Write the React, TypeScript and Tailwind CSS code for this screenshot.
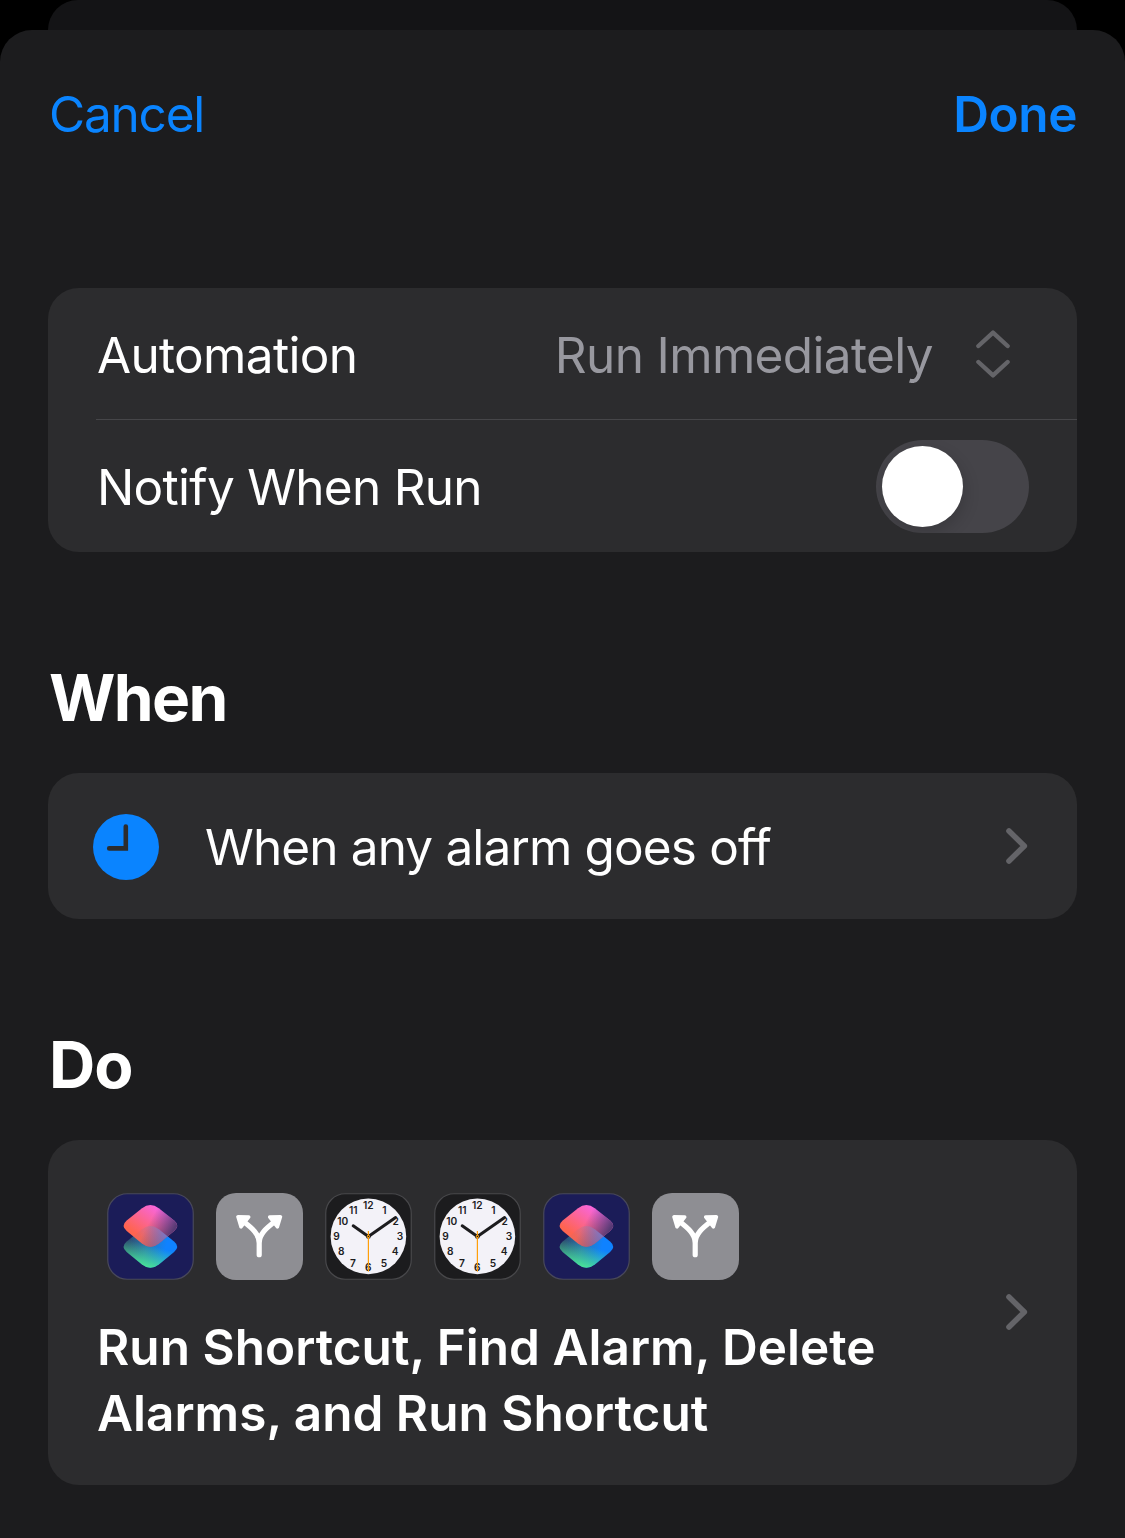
import { useId, useState } from "react";

function ShortcutsIcon() {
  const id = useId().replace(/[^a-zA-Z0-9]/g, "");
  const diamond =
    "M35 15.2Q43.4 8.6 51.8 15.2L67.1 27.5Q73.3 32.8 67.1 38.1L51.8 50.4Q43.4 57 35 50.4L19.7 38.1Q13.5 32.8 19.7 27.5Z";
  return (
    <svg width="87" height="87" viewBox="0 0 87 87" className="shrink-0">
      <defs>
        <linearGradient id={`${id}b`} gradientUnits="userSpaceOnUse" x1="20" y1="30" x2="58" y2="38">
          <stop offset="0" stopColor="#2c4a70" />
          <stop offset="0.5" stopColor="#2a7bb0" />
          <stop offset="1" stopColor="#0f82ff" />
        </linearGradient>
        <linearGradient id={`${id}g`} gradientUnits="userSpaceOnUse" x1="40" y1="54" x2="46" y2="32">
          <stop offset="0" stopColor="#4be696" />
          <stop offset="1" stopColor="#47e08f" stopOpacity="0" />
        </linearGradient>
        <linearGradient id={`${id}p`} gradientUnits="userSpaceOnUse" x1="48" y1="13" x2="28" y2="40">
          <stop offset="0" stopColor="#f866dc" />
          <stop offset="1" stopColor="#ff6450" />
        </linearGradient>
        <linearGradient id={`${id}f`} gradientUnits="userSpaceOnUse" x1="44" y1="26" x2="66" y2="38">
          <stop offset="0" stopColor="#4c3a78" stopOpacity="0" />
          <stop offset="1" stopColor="#4f3870" stopOpacity="0.95" />
        </linearGradient>
        <linearGradient id={`${id}o`} gradientUnits="userSpaceOnUse" x1="30" y1="24" x2="58" y2="20">
          <stop offset="0" stopColor="#d86868" stopOpacity="0.25" />
          <stop offset="1" stopColor="#7d86d8" stopOpacity="0.75" />
        </linearGradient>
        <clipPath id={`${id}c`}>
          <path d={diamond} />
        </clipPath>
      </defs>
      <rect x="0.75" y="0.75" width="85.5" height="85.5" rx="19.5" fill="#1b1c58" stroke="#48485a" strokeWidth="1.2" />
      <g transform="translate(0 21)">
        <path d={diamond} fill={`url(#${id}b)`} />
        <path d={diamond} fill={`url(#${id}g)`} />
      </g>
      <path d={diamond} fill={`url(#${id}p)`} />
      <path d={diamond} fill={`url(#${id}f)`} />
      <g clipPath={`url(#${id}c)`}>
        <path d={diamond} transform="translate(0 21)" fill={`url(#${id}o)`} />
      </g>
    </svg>
  );
}

function BranchIcon() {
  return (
    <svg width="87" height="87" viewBox="0 0 87 87" className="shrink-0">
      <rect width="87" height="87" rx="20" fill="#8e8e93" />
      <g stroke="#fff" strokeLinecap="round" strokeLinejoin="round">
        <path
          d="M43.2 61.7V50C43.2 41 36 35 27.5 28.5M43.2 50C43.2 41 50.4 35 58.9 28.5"
          fill="none"
          strokeWidth="5.2"
        />
        <path d="M21.9 23.8L32.8 24L25 33.9ZM64.5 23.8L53.6 24L61.4 33.9Z" fill="#fff" strokeWidth="3.4" />
      </g>
    </svg>
  );
}

const numerals: [string, number, number][] = [
  ["12", 43.3, 12.7],
  ["1", 59.5, 17.6],
  ["2", 70.8, 28.6],
  ["3", 75.1, 43.8],
  ["4", 70.2, 58.8],
  ["5", 58.9, 70],
  ["6", 43.3, 74.6],
  ["7", 28, 70],
  ["8", 16.3, 58.8],
  ["9", 11.6, 43.8],
  ["10", 17.7, 28.8],
  ["11", 28.2, 17.6],
];

function ClockIcon() {
  return (
    <svg width="87" height="87" viewBox="0 0 87 87" className="shrink-0">
      <rect x="0.75" y="0.75" width="85.5" height="85.5" rx="19.5" fill="#1c1c1e" stroke="#48484b" strokeWidth="1.2" />
      <circle cx="43.4" cy="43.4" r="37.8" fill="#f3f2f8" />
      {numerals.map(([label, x, y]) => (
        <text key={label} x={x} y={y + 3.6} textAnchor="middle" fontSize="10.2" fontWeight="600" fill="#1c1c1e">
          {label}
        </text>
      ))}
      <g stroke="#1c1c1e" strokeLinecap="round">
        <path d="M43.4 43.4L28.2 32.8" strokeWidth="3" />
        <path d="M43.4 43.4L70.6 24.5" strokeWidth="3" />
      </g>
      <circle cx="43.4" cy="43.4" r="2.4" fill="#1c1c1e" />
      <path d="M43.4 38V78.5" stroke="#ff9f0a" strokeWidth="1.2" />
      <circle cx="43.4" cy="43.4" r="1.6" fill="#ff9f0a" />
      <circle cx="43.4" cy="43.4" r="0.7" fill="#1c1c1e" />
    </svg>
  );
}

function Chevron() {
  return (
    <svg width="22" height="36" viewBox="0 0 22 36" className="shrink-0">
      <path
        d="M3 3L18.3 18L3 33"
        fill="none"
        stroke="#646468"
        strokeWidth="5.6"
        strokeLinecap="round"
        strokeLinejoin="round"
      />
    </svg>
  );
}

const actions = [ShortcutsIcon, BranchIcon, ClockIcon, ClockIcon, ShortcutsIcon, BranchIcon];

export default function App() {
  const [notify, setNotify] = useState(false);
  return (
    <div className="flex h-[1538px] w-[1125px] flex-col overflow-hidden bg-black font-['Inter',sans-serif] text-[49.5px] leading-[66px] text-white">
      <div className="mx-12 h-[30px] shrink-0 rounded-t-[30px] bg-[#141416]" />
      <main className="flex flex-1 flex-col rounded-t-[32px] bg-[#1c1c1e] px-12">
        <header className="mt-[51px] flex justify-between text-[#0a84ff]">
          <button className="pl-px tracking-[-1.2px]">Cancel</button>
          <button className="font-semibold tracking-[-0.4px]">Done</button>
        </header>

        <section className="mt-[141px] h-[264px] rounded-[31px] bg-[#2c2c2e] pl-12">
          <div className="flex h-[132px] items-center border-b border-[#464649] pr-[67px]">
            <span className="mt-[3px] pl-px tracking-[-0.68px]">Automation</span>
            <span className="mt-[3px] ml-auto tracking-[-0.65px] text-[#98989f]">Run Immediately</span>
            <svg width="34" height="48" viewBox="0 0 34 48" className="ml-[43px] shrink-0">
              <path
                d="M2.4 16L17 2.6L31.6 16M2.4 32L17 45.4L31.6 32"
                fill="none"
                stroke="#646468"
                strokeWidth="4.4"
                strokeLinecap="round"
                strokeLinejoin="round"
              />
            </svg>
          </div>
          <div className="flex h-[132px] items-center justify-between pr-12">
            <span className="mt-[2px] pl-px tracking-[-0.72px]">Notify When Run</span>
            <button
              role="switch"
              aria-checked={notify}
              aria-label="Notify When Run"
              onClick={() => setNotify(!notify)}
              className={
                notify
                  ? "mt-px flex h-[93px] w-[153px] justify-end rounded-full bg-[#30d158] p-1.5"
                  : "mt-px flex h-[93px] w-[153px] overflow-hidden rounded-full bg-[#454449] p-1.5"
              }
            >
              <span className="size-[81px] rounded-full bg-white shadow-[2px_6px_16px_rgba(0,0,0,0.16)]" />
            </button>
          </div>
        </section>

        <h2 className="mt-[106px] pl-px text-[64px] leading-[80px] font-bold tracking-[-1.6px]">When</h2>
        <section className="mt-[35px] flex h-[146px] items-center rounded-[31px] bg-[#2c2c2e] pr-[49px] pl-[45px]">
          <svg width="66" height="66" viewBox="0 0 66 66" className="mt-[2px] shrink-0">
            <circle cx="33" cy="33" r="33" fill="#0a84ff" />
            <path d="M32.8 12.5V34.4H16.2" fill="none" stroke="#2c2c2e" strokeWidth="4.6" strokeLinecap="round" />
          </svg>
          <span className="mt-[2px] ml-[46px] flex-1 tracking-[-0.86px]">When any alarm goes off</span>
          <Chevron />
        </section>

        <h2 className="mt-[106px] pl-px text-[64px] leading-[80px] font-bold tracking-[-1px]">Do</h2>
        <section className="mt-[35px] flex h-[345px] rounded-[31px] bg-[#2c2c2e] pr-[49px] pl-12">
          <div className="flex-1 pt-[53px]">
            <div className="flex gap-[22px] pl-[11px]">
              {actions.map((Icon, i) => (
                <Icon key={i} />
              ))}
            </div>
            <p className="mt-[34px] pl-px font-semibold tracking-[0.02px]">
              Run Shortcut, Find Alarm, Delete
              <br />
              Alarms, and Run Shortcut
            </p>
          </div>
          <div className="flex items-center pb-px">
            <Chevron />
          </div>
        </section>
      </main>
    </div>
  );
}
